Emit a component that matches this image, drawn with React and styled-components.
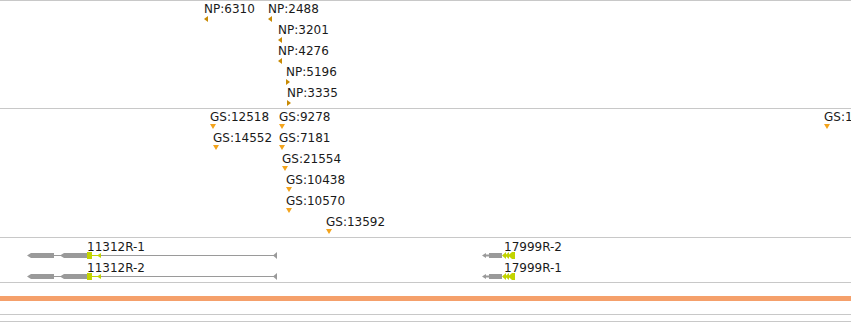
import React from 'react'
import styled, { createGlobalStyle } from 'styled-components'

const GlobalStyle = createGlobalStyle`
    html, body {
        margin: 0;
        padding: 0;
        background: #ffffff;
        overflow: hidden;
    }
    body {
        font-family: "DejaVu Sans", Verdana, sans-serif;
    }
`

const Browser = styled.div`
    width: 851px;
    height: 322px;
    display: flex;
    flex-direction: column;
    overflow: hidden;
    border-top: 1px solid #c8c8c8;
    box-sizing: border-box;
`

const Track = styled.div`
    position: relative;
    flex: none;
    height: ${p => p.$height}px;
    border-bottom: 1px solid #c8c8c8;
    overflow: hidden;
`

const Feature = styled.div`
    position: absolute;
    left: ${p => p.$x}px;
    top: ${p => 1 + p.$row * 21}px;
    display: flex;
    flex-direction: column;
    align-items: flex-start;
`

const Label = styled.span`
    font-size: 12px;
    line-height: 14px;
    color: #1a1a1a;
    white-space: nowrap;
`

const Arrow = styled.span`
    width: 0;
    height: 0;
    ${p => p.$dir === 'down' ? `
        border-left: 3px solid transparent;
        border-right: 3px solid transparent;
        border-top: 5px solid ${p.$color};
    ` : `
        border-top: 3px solid transparent;
        border-bottom: 3px solid transparent;
        ${p.$dir === 'left' ? 'border-right' : 'border-left'}: 4px solid ${p.$color};
    `}
`

const Transcript = styled.div`
    position: absolute;
    left: ${p => p.$x}px;
    top: ${p => p.$row * 21}px;
    display: flex;
    flex-direction: column;
`

const TranscriptLabel = styled(Label)`
    margin-top: 2px;
    padding-left: ${p => p.$offset}px;
`

const Glyph = styled.svg`
    display: block;
    margin-top: -3px;
`

const Ruler = styled.div`
    display: flex;
    flex-direction: column;
    padding-top: 13px;
`

const OrangeBar = styled.div`
    height: 5px;
    background: #f5a06b;
`

const RuleLine = styled.div`
    margin-top: ${p => p.$gap}px;
    height: 1px;
    background: #c8c8c8;
`

const NP_COLOR = '#c88a04'
const GS_COLOR = '#f4a41c'
const GRAY = '#9a9a9a'
const CDS = '#c2d400'

const npFeatures = [
    { name: 'NP:6310', x: 204, row: 0, dir: 'left' },
    { name: 'NP:2488', x: 268, row: 0, dir: 'left' },
    { name: 'NP:3201', x: 278, row: 1, dir: 'left' },
    { name: 'NP:4276', x: 278, row: 2, dir: 'left' },
    { name: 'NP:5196', x: 286, row: 3, dir: 'right' },
    { name: 'NP:3335', x: 287, row: 4, dir: 'right' },
]

const gsFeatures = [
    { name: 'GS:12518', x: 210, row: 0 },
    { name: 'GS:9278', x: 279, row: 0 },
    { name: 'GS:14552', x: 213, row: 1 },
    { name: 'GS:7181', x: 279, row: 1 },
    { name: 'GS:21554', x: 282, row: 2 },
    { name: 'GS:10438', x: 286, row: 3 },
    { name: 'GS:10570', x: 286, row: 4 },
    { name: 'GS:13592', x: 326, row: 5 },
    { name: 'GS:1', x: 824, row: 0 },
]

// long transcript, drawn from x=27
const LongGene = () => (
    <Glyph width="253" height="9">
        <line x1="27" y1="4.5" x2="34" y2="4.5" stroke={GRAY} />
        <line x1="65" y1="4.5" x2="74" y2="4.5" stroke={CDS} />
        <line x1="74" y1="4.5" x2="250" y2="4.5" stroke={GRAY} />
        <polygon points="0,4.5 4,2 27,2 27,7 4,7" fill={GRAY} />
        <polygon points="33,4.5 37,2 60,2 60,7 37,7" fill={GRAY} />
        <rect x="60" y="1" width="5" height="7" fill={CDS} />
        <polygon points="70,4.5 74,2 74,7" fill={CDS} />
        <polygon points="246,4.5 250,1 250,8" fill={GRAY} />
    </Glyph>
)

// short transcript, drawn from x=481
const ShortGene = () => (
    <Glyph width="35" height="9">
        <line x1="4" y1="4.5" x2="8" y2="4.5" stroke={GRAY} strokeWidth="2" />
        <polygon points="1,4.5 5,2 5,7" fill={GRAY} />
        <rect x="8" y="2" width="13" height="5" fill={GRAY} />
        <polygon points="21,4.5 25,1 25,8" fill={CDS} />
        <polygon points="24,4.5 28,1 28,8" fill={CDS} />
        <polygon points="27,4.5 31,1 31,8" fill={CDS} />
        <rect x="31" y="1" width="3" height="7" fill={CDS} />
    </Glyph>
)

const transcripts = [
    { name: '11312R-1', x: 27, row: 0, offset: 60, Draw: LongGene },
    { name: '11312R-2', x: 27, row: 1, offset: 60, Draw: LongGene },
    { name: '17999R-2', x: 481, row: 0, offset: 23, Draw: ShortGene },
    { name: '17999R-1', x: 481, row: 1, offset: 23, Draw: ShortGene },
]

export default function App() {
    return (
        <>
            <GlobalStyle />
            <Browser>
                <Track $height={107}>
                    {npFeatures.map(f => (
                        <Feature key={f.name} $x={f.x} $row={f.row}>
                            <Label>{f.name}</Label>
                            <Arrow $dir={f.dir} $color={NP_COLOR} />
                        </Feature>
                    ))}
                </Track>
                <Track $height={128}>
                    {gsFeatures.map(f => (
                        <Feature key={f.name} $x={f.x} $row={f.row}>
                            <Label>{f.name}</Label>
                            <Arrow $dir="down" $color={GS_COLOR} />
                        </Feature>
                    ))}
                </Track>
                <Track $height={44}>
                    {transcripts.map(({ name, x, row, offset, Draw }) => (
                        <Transcript key={name} $x={x} $row={row}>
                            <TranscriptLabel $offset={offset}>{name}</TranscriptLabel>
                            <Draw />
                        </Transcript>
                    ))}
                </Track>
                <Ruler>
                    <OrangeBar />
                    <RuleLine $gap={13} />
                    <RuleLine $gap={6} />
                </Ruler>
            </Browser>
        </>
    )
}
